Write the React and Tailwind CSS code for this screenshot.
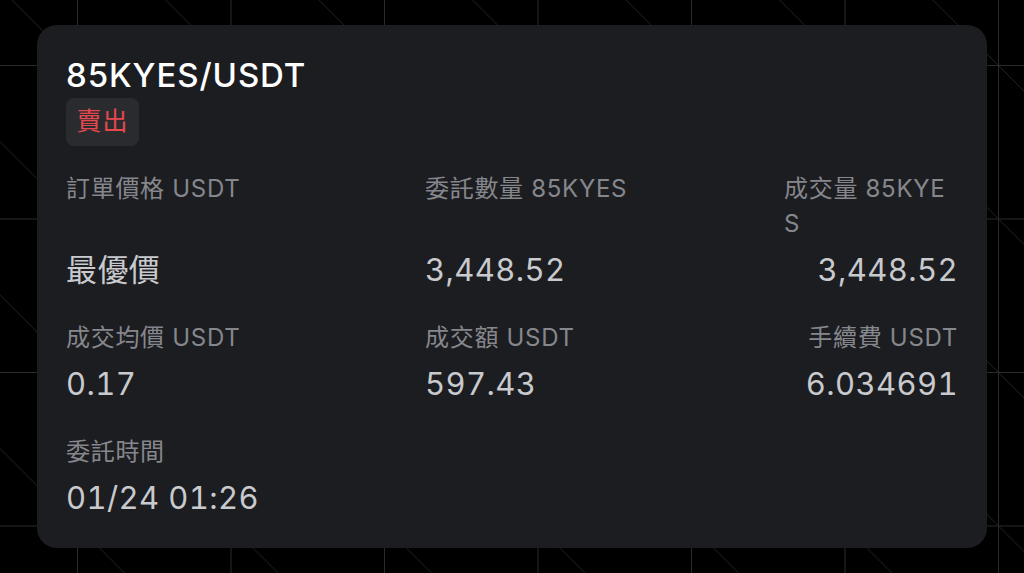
import React from "react";

function Field({ label, value, align = "left", labelClass = "" }) {
  return (
    <div className={`flex flex-col justify-between ${align === "right" ? "items-end" : "items-start"}`}>
      <div className={`text-[24px] leading-[35px] tracking-[0.7px] text-[#86878c] ${labelClass}`}>{label}</div>
      <div className="mt-[9px] text-[31px] leading-[40px] tracking-[0.4px] tabular-nums text-[#c9cacd]">{value}</div>
    </div>
  );
}

export default function App() {
  return (
    <div className="w-[1024px] h-[573px] overflow-hidden bg-black bg-[linear-gradient(to_top_right,transparent_calc(50%_-_0.7px),#232323_50%,transparent_calc(50%_+_0.7px)),linear-gradient(to_right,#2a2a2a_1px,transparent_1px),linear-gradient(to_bottom,#2a2a2a_1px,transparent_1px)] bg-[length:153.5px_153.5px] bg-[position:77px_65px] pt-[25px] pl-[37px] font-['Inter','Noto_Sans_CJK_TC',sans-serif]">
      <div className="w-[950px] h-[523px] rounded-[20px] bg-[#1c1d21] pt-[30px] pl-[29px] pr-[29px]">
        <div className="text-[33px] leading-[40px] font-medium tracking-[0.9px] text-white">85KYES/USDT</div>
        <div className="mt-[3px] flex h-[48px] w-[73px] items-center justify-center rounded-[8px] bg-[#2a2b2f] text-[25px] tracking-[1px] text-[#e5484d]">
          賣出
        </div>
        <div className="mt-[25px] grid grid-cols-[359px_359px_1fr] gap-y-[30px]">
          <Field label="訂單價格 USDT" value="最優價" />
          <Field label="委託數量 85KYES" value="3,448.52" />
          <Field label="成交量 85KYES" value="3,448.52" align="right" labelClass="max-w-[174px] break-all text-left" />
          <Field label="成交均價 USDT" value="0.17" />
          <Field label="成交額 USDT" value="597.43" />
          <Field label="手續費 USDT" value="6.034691" align="right" />
          <Field label="委託時間" value="01/24 01:26" />
        </div>
      </div>
    </div>
  );
}
